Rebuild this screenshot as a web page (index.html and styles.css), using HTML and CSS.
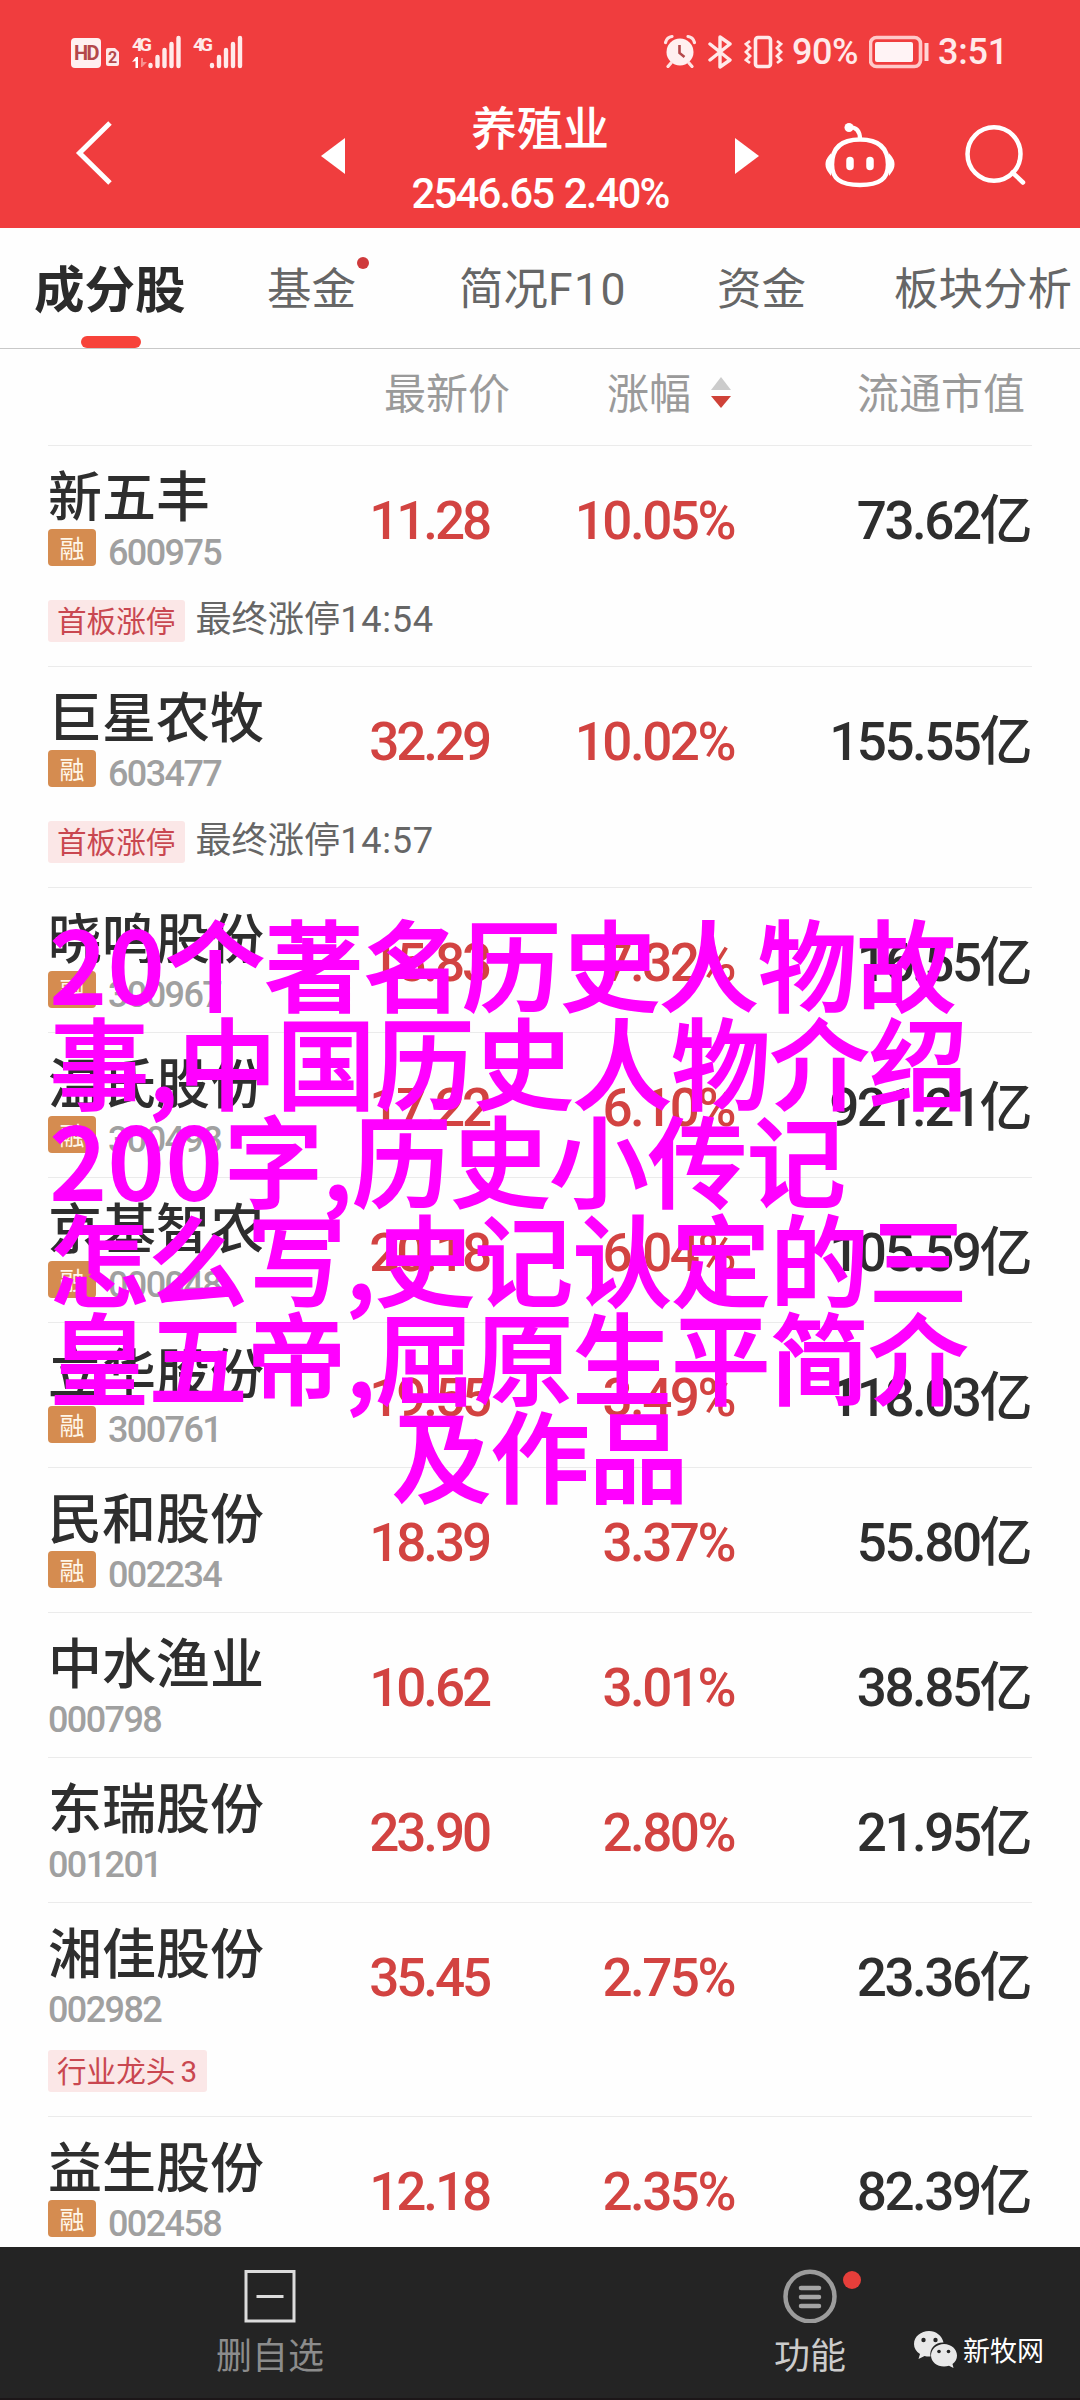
FILE: index.html
```html
<!DOCTYPE html>
<html lang="zh-CN">
<head>
<meta charset="utf-8">
<title>养殖业</title>
<link rel="stylesheet" href="styles.css">
</head>
<body>
<div class="screen">
  <header class="header">
    <div class="status">
      <svg class="status-left" width="174" height="36" viewBox="0 0 174 36">
        <rect x="0" y="4" width="30" height="30" rx="4" fill="#fff0f0"/>
        <text class="hd" x="3" y="26">HD</text>
        <path d="M35 16q0-2 2-2h7l4 4v12q0 2-2 2h-9q-2 0-2-2z" fill="#ffe9e9"/>
        <text class="sim" x="37" y="29">2</text>
        <text class="net" x="61" y="17">4G</text>
        <path d="M61 28l4-5h2v11h-2.500v-7z" fill="#fff"/>
        <path d="M70 24h2v4h4l-5 5h-1z" fill="#f7908e"/>
        <path d="M79.500 32v-1M86.500 32v-9M93.500 32v-16M100.500 32v-22M107.500 32V4" class="bars"/>
        <text class="net" x="122" y="17">4G</text>
        <path d="M141 32v-1M148 32v-9M155 32v-16M162 32v-22M169 32V4" class="bars"/>
      </svg>
      <div class="status-right">
        <svg width="32" height="34" viewBox="0 0 32 34">
          <circle cx="16" cy="18" r="13.500" fill="#fff0f0"/>
          <path d="M1.500 8.500Q3 3 8 2.500M30.500 8.500Q29 3 24 2.500M7 29l-3 3.500M25 29l3 3.500" fill="none" stroke="#ffe3e3" stroke-width="3.200" stroke-linecap="round"/>
          <path d="M15.500 11v8l5 4" fill="none" stroke="#b4484a" stroke-width="2.600"/>
        </svg>
        <svg class="bt" width="25" height="34" viewBox="0 0 25 34"><path d="M2 9l20 16-10 7V2l10 7L2 25" fill="none" stroke="#ffe9e9" stroke-width="3.400" stroke-linejoin="round" stroke-linecap="round"/></svg>
        <svg class="vib" width="39" height="36" viewBox="0 0 39 36"><rect x="11.500" y="3.500" width="15" height="29" rx="2.500" fill="none" stroke="#ffe9e9" stroke-width="3.600"/><path d="M6 7l-4 3 4 4-4 4 4 4-4 4 4 3M33 7l4 3-4 4 4 4-4 4 4 4-4 3" fill="none" stroke="#ffe9e9" stroke-width="2.800"/></svg>
        <span class="pctx">90%</span>
        <svg class="bat" width="62" height="36" viewBox="0 0 62 36"><rect x="1.500" y="3.500" width="50" height="29" rx="6" fill="none" stroke="#ffc9c9" stroke-width="3.600"/><rect x="6" y="8" width="38" height="20" rx="2" fill="#fff3f5"/><path d="M57.500 9v18" stroke="#ffd5d5" stroke-width="4"/></svg>
        <span class="clock">3:51</span>
      </div>
    </div>
    <div class="nav">
      <svg class="back" width="40" height="68" viewBox="0 0 40 68"><path d="M36 5L5.500 35 36 65" fill="none" stroke="#fff" stroke-width="5"/></svg>
      <svg class="prev" width="24" height="38" viewBox="0 0 24 38"><path d="M24 1v36L0 19z" fill="#fff"/></svg>
      <div class="titles">
        <h1 class="title">养殖业</h1>
        <div class="index">2546.65 2.40%</div>
      </div>
      <svg class="next" width="24" height="38" viewBox="0 0 24 38"><path d="M0 1v36l24-18z" fill="#fff"/></svg>
      <svg class="robot" width="72" height="68" viewBox="0 0 72 68">
        <g fill="none" stroke="#fff" stroke-width="4.500"><path d="M35 17.500c19 0 28 9 28 25 0 14-8 20.500-28 20.500S7 56.500 7 42.500c0-16 9-25 28-25z"/><path d="M24 5q11 0 11 12" stroke-width="4.200"/></g>
        <circle cx="24" cy="5.500" r="4.500" fill="#fff"/>
        <path d="M5 34q-7 8 0 17zM65 34q7 8 0 17z" fill="#fff" stroke="#fff" stroke-width="2"/>
        <path d="M25 38.500v6M45 38.500v6" stroke="#fff" stroke-width="7.500" stroke-linecap="round"/>
      </svg>
      <svg class="search" width="62" height="62" viewBox="0 0 62 62"><ellipse cx="29" cy="30" rx="26.500" ry="26.800" fill="none" stroke="#fff" stroke-width="4.500"/><path d="M47.500 48.500L58 58.500" stroke="#fff" stroke-width="4.500" stroke-linecap="round"/></svg>
    </div>
  </header>

  <nav class="tabs">
    <a class="tab tab-active">成分股</a>
    <a class="tab tab-fund">基金<i class="tab-dot"></i></a>
    <a class="tab tab-f10">简况<span class="latin">F10</span></a>
    <a class="tab tab-money">资金</a>
    <a class="tab">板块分析</a>
  </nav>

  <main class="list">
    <div class="columns">
      <span></span><span class="col-price">最新价</span>
      <span class="col-change">涨幅<svg width="20" height="32" viewBox="0 0 20 32"><path d="M0 13L10 0l10 13z" fill="#ccc"/><path d="M0 19h20L10 31z" fill="#cf4238"/></svg></span>
      <span class="col-cap">流通市值</span>
    </div>

    <section class="row">
      <div class="stock"><div class="name">新五丰</div><div class="sub"><b class="margin">融</b><span class="code">600975</span></div></div>
      <span class="num up">11.28</span><span class="num up">10.05%</span><span class="num">73.62亿</span>
      <div class="tags"><span class="tag">首板涨停</span><span class="note">最终涨停<span class="time">14:54</span></span></div>
    </section>
    <section class="row">
      <div class="stock"><div class="name">巨星农牧</div><div class="sub"><b class="margin">融</b><span class="code">603477</span></div></div>
      <span class="num up">32.29</span><span class="num up">10.02%</span><span class="num">155.55亿</span>
      <div class="tags"><span class="tag">首板涨停</span><span class="note">最终涨停<span class="time">14:57</span></span></div>
    </section>
    <section class="row">
      <div class="stock"><div class="name">晓鸣股份</div><div class="sub"><b class="margin">融</b><span class="code">300967</span></div></div>
      <span class="num up">15.83</span><span class="num up">7.32%</span><span class="num">16.55亿</span>
    </section>
    <section class="row">
      <div class="stock"><div class="name">温氏股份</div><div class="sub"><b class="margin">融</b><span class="code">300498</span></div></div>
      <span class="num up">17.22</span><span class="num up">6.10%</span><span class="num">921.21亿</span>
    </section>
    <section class="row">
      <div class="stock"><div class="name">京基智农</div><div class="sub"><b class="margin">融</b><span class="code">000048</span></div></div>
      <span class="num up">20.18</span><span class="num up">6.04%</span><span class="num">105.59亿</span>
    </section>
    <section class="row">
      <div class="stock"><div class="name">立华股份</div><div class="sub"><b class="margin">融</b><span class="code">300761</span></div></div>
      <span class="num up">19.55</span><span class="num up">3.49%</span><span class="num">118.03亿</span>
    </section>
    <section class="row">
      <div class="stock"><div class="name">民和股份</div><div class="sub"><b class="margin">融</b><span class="code">002234</span></div></div>
      <span class="num up">18.39</span><span class="num up">3.37%</span><span class="num">55.80亿</span>
    </section>
    <section class="row">
      <div class="stock"><div class="name">中水渔业</div><div class="sub"><span class="code">000798</span></div></div>
      <span class="num up">10.62</span><span class="num up">3.01%</span><span class="num">38.85亿</span>
    </section>
    <section class="row">
      <div class="stock"><div class="name">东瑞股份</div><div class="sub"><span class="code">001201</span></div></div>
      <span class="num up">23.90</span><span class="num up">2.80%</span><span class="num">21.95亿</span>
    </section>
    <section class="row">
      <div class="stock"><div class="name">湘佳股份</div><div class="sub"><span class="code">002982</span></div></div>
      <span class="num up">35.45</span><span class="num up">2.75%</span><span class="num">23.36亿</span>
      <div class="tags tags-near"><span class="tag">行业龙头<span class="rank">3</span></span></div>
    </section>
    <section class="row">
      <div class="stock"><div class="name">益生股份</div><div class="sub"><b class="margin">融</b><span class="code">002458</span></div></div>
      <span class="num up">12.18</span><span class="num up">2.35%</span><span class="num">82.39亿</span>
    </section>
  </main>

  <footer class="toolbar">
    <div class="tool">
      <svg width="54" height="54" viewBox="0 0 54 54"><path d="M3 2.500h48v49.500H3zM13.500 27.500h27" fill="none" stroke="#dcdcdc" stroke-width="3"/></svg>
      <span class="tool-label dim">删自选</span>
    </div>
    <div class="tool">
      <svg width="56" height="54" viewBox="0 0 56 54"><ellipse cx="28" cy="27.500" rx="24.500" ry="24.800" fill="none" stroke="#9c9c9c" stroke-width="4.500"/><path d="M19 19h18M19 28h18M19 37h18" stroke="#a4a4a4" stroke-width="4.500" stroke-linecap="round"/></svg>
      <i class="tool-dot"></i>
      <span class="tool-label">功能</span>
    </div>
  </footer>

  <div class="account">
    <svg width="43" height="38" viewBox="0 0 43 38">
      <path d="M15 1C7 1 0 6.500 0 14c0 4 2 7.500 6 10l-1.500 5 6-3q3 .8 6 .5C15 18 22 12 29.500 12.500 28 5.500 22 1 15 1z" fill="#e8e8e8"/>
      <path d="M30 14c-7 0-13 5-13 11.500S23 36.500 30 36.500q2.500 0 5-.7l4.500 2.200-1-4c3-2 4.500-5 4.500-8.500C43 19 37 14 30 14z" fill="#e8e8e8"/>
      <g fill="#242424"><circle cx="9.500" cy="10" r="2.200"/><circle cx="21.500" cy="10" r="2.200"/><circle cx="25" cy="21.500" r="1.800"/><circle cx="34.500" cy="21.500" r="1.800"/></g>
    </svg>
    <span>新牧网</span>
  </div>

  <div class="caption">
    <div><span class="digits">20</span>个著名历史人物故</div>
    <div>事,中国历史人物介绍</div>
    <div><span class="digits">200</span>字,历史小传记</div>
    <div>怎么写,史记认定的三</div>
    <div>皇五帝,屈原生平简介</div>
    <div class="caption-last">及作品</div>
  </div>
</div>
</body>
</html>
```
FILE: styles.css
```css
* { box-sizing: border-box; }
body {
  margin: 0;
  background: #fefefe;
  font-family: "Noto Sans CJK SC", sans-serif;
  color: #2e2e2e;
}
svg { display: block; flex: none; }
.screen {
  position: relative;
  width: 1080px;
  height: 2400px;
  overflow: hidden;
  display: flex;
  flex-direction: column;
}

/* header */
.header { height: 228px; flex: none; background: #f03d3e; color: #fff; }
.status { display: flex; justify-content: space-between; padding: 34px 74px 0 71px; height: 84px; }
.status-left .bars { stroke: #ffeaea; stroke-width: 4.4; stroke-linecap: round; fill: none; }
.hd { font: 700 20px Roboto, sans-serif; fill: #b4484a; letter-spacing: -1.5px; }
.sim { font: 700 16px Roboto, sans-serif; fill: #b4484a; }
.net { font: 700 19px Roboto, sans-serif; fill: #ffe9e9; letter-spacing: -4px; }
.status-right { display: flex; align-items: flex-start; font: 500 36px/37px Roboto, sans-serif; color: #ffeaea; }
.bt { margin: 1px 0 0 12px; }
.vib { margin-left: 11px; }
.pctx { width: 70px; margin-left: 9px; letter-spacing: -0.5px; white-space: nowrap; }
.bat { margin-left: 7px; }
.clock { width: 68px; margin-left: 7px; letter-spacing: -0.2px; white-space: nowrap; }
.nav { display: flex; align-items: flex-start; padding-left: 74px; }
.back { margin-top: 34px; }
.prev { margin: 53px 0 0 207px; }
.titles { width: 390px; text-align: center; padding-top: 12px; }
.title { margin: 0; font-size: 46px; line-height: 58px; font-weight: 500; }
.index { font: 500 42px/50px Roboto, sans-serif; letter-spacing: -1.9px; word-spacing: 2px; margin: 15px 0 0 0; }
.next { margin-top: 53px; }
.robot { margin: 38px 0 0 66px; }
.search { margin: 40px 0 0 68px; }

/* tabs */
.tabs {
  height: 121px;
  flex: none;
  display: flex;
  padding-left: 34px;
  border-bottom: 1px solid #c8c8c8;
  font-size: 44.5px;
  line-height: 116px;
  color: #666;
  white-space: nowrap;
}
.tab { position: relative; }
.tab-active { width: 152px; margin-right: 81px; font-size: 50.5px; font-weight: 700; color: #2b2b2b; }
.tab-active::after {
  content: "";
  position: absolute;
  left: 47px;
  bottom: 0;
  width: 60px;
  height: 12px;
  border-radius: 6px;
  background: #f7433a;
}
.tab-fund { margin-right: 103px; }
.tab-dot { position: absolute; right: -13px; top: 29px; width: 12px; height: 12px; border-radius: 50%; background: #cf3a3c; }
.tab-f10 { width: 168px; margin-right: 90px; }
.latin { font-family: Roboto, sans-serif; letter-spacing: 1.4px; }
.tab-money { margin-right: 88px; }

/* stock list */
.list { flex: 1; min-height: 0; overflow: hidden; padding: 0 48px; }
.columns, .row { display: grid; grid-template-columns: 252px 190px 246px 1fr; }
.columns { height: 96px; font-size: 42px; line-height: 84px; color: #9a9a9a; text-align: right; white-space: nowrap; }
.col-price { margin-right: -20px; }
.col-change { display: flex; justify-content: flex-end; align-items: flex-start; gap: 20px; padding-right: 5px; }
.col-change svg { margin-top: 28px; }
.col-cap { padding-right: 7px; }
.row { border-top: 1px solid #ebebeb; padding-bottom: 24px; }
.stock { padding-top: 18px; }
.name { font-size: 54px; line-height: 60px; font-weight: 500; white-space: nowrap; }
.sub { display: flex; align-items: flex-end; height: 37px; margin-top: 5px; }
.margin {
  width: 48px;
  height: 37px;
  margin-right: 12px;
  border-radius: 4px;
  background: #d58c50;
  color: #fff6e8;
  font-size: 25px;
  line-height: 36px;
  font-weight: 400;
  text-align: center;
}
.code { font: 500 36px/26px Roboto, sans-serif; letter-spacing: -1.6px; color: #a0a0a0; }
.num {
  font: 500 53px/60px Roboto, "Noto Sans CJK SC", sans-serif;
  letter-spacing: -2.5px;
  padding: 45px 2px 0 0;
  height: 105px;
  text-align: right;
  white-space: nowrap;
}
.stock + .num { letter-spacing: -3.1px; padding-right: 1px; }
.up { color: #d24341; }
.tags { grid-column: 1 / -1; display: flex; height: 42px; margin-top: 34px; }
.tags-near { margin-top: 27px; }
.tag { height: 42px; padding: 0 10px 0 9px; border-radius: 3px; background: #fbe7e7; color: #c94750; font-size: 29.6px; line-height: 40px; }
.rank { font-family: Roboto, sans-serif; margin-left: 5px; }
.note { margin-left: 10px; font-size: 36.2px; line-height: 33px; color: #666; }
.time { font-family: Roboto, sans-serif; letter-spacing: 0.7px; }

/* bottom toolbar */
.toolbar { height: 153px; flex: none; display: flex; background: #242424; border-bottom: 2px solid #1c1618; }
.tool { position: relative; width: 540px; display: flex; flex-direction: column; align-items: center; padding-top: 22px; }
.tool-label { margin-top: 7px; font-size: 36px; line-height: 46px; color: #ccc; }
.dim { color: #8c8c8c; }
.tool-dot { position: absolute; left: 303px; top: 24px; width: 18px; height: 18px; border-radius: 50%; background: #e63e3a; }
.account {
  position: absolute;
  left: 914px;
  top: 2330px;
  display: flex;
  gap: 6px;
  font-size: 27px;
  line-height: 40px;
  color: #fff;
  white-space: nowrap;
}

/* caption over the list */
.caption {
  position: absolute;
  left: 50px;
  top: 912px;
  width: 980px;
  font-size: 98.7px;
  line-height: 98.2px;
  font-weight: 500;
  color: #f0f;
  -webkit-text-stroke: 1.8px #f0f;
  white-space: nowrap;
}
.digits { letter-spacing: 1.8px; }
.caption-last { text-align: center; }
```
